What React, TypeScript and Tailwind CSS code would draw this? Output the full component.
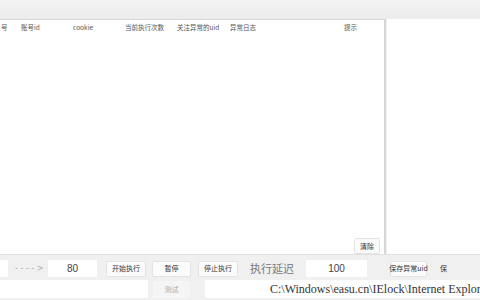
export default function App() {
  const cols = [
    { w: 'w-[20px]', t: '号' },
    { w: 'w-[52px]', t: '账号id' },
    { w: 'w-[52px]', t: 'cookie' },
    { w: 'w-[52px]', t: '当前执行次数' },
    { w: 'w-[53px]', t: '关注异常的uid' },
    { w: 'w-[114px]', t: '异常日志' },
    { w: 'flex-1', t: '提示' },
  ]

  const btn = 'h-[16px] bg-[#fbfbfb] border border-[#e3e3e3] rounded-[2px] text-[7px] text-[#333] flex items-center justify-center whitespace-nowrap'

  return (
    <div className="w-[480px] h-[300px] bg-[#f0f0f0] flex flex-col overflow-hidden" style={{ fontFamily: '"Noto Sans CJK SC", "Liberation Sans", sans-serif' }}>
      {/* top strip */}
      <div className="h-[19px] bg-gradient-to-b from-[#f3f3f3] to-[#ececec] shrink-0" />

      {/* grid area */}
      <div className="h-[235px] flex shrink-0">
        <div className="w-[386px] bg-white border-t border-r-2 border-[#d6d6d6] flex flex-col">
          <div className="flex h-[15px] items-center text-[6.5px] text-[#555]">
            {cols.map(c => (
              <div key={c.t} className={`${c.w} pl-[1px] whitespace-nowrap overflow-hidden`}>{c.t}</div>
            ))}
          </div>
          <div className="flex-1" />
          <div className="flex justify-end pr-[4px]">
            <div className={`${btn} w-[26px] h-[15px]`}>清除</div>
          </div>
        </div>
        <div className="flex-1 bg-white ml-[1px]" />
      </div>

      {/* bottom controls */}
      <div className="flex-1 border-t border-[#e0e0e0] flex flex-col pt-[5px]">
        <div className="flex items-center h-[17px]">
          <div className="w-[8px] h-[17px] bg-white" />
          <div className="ml-[7px] w-[28px] text-[8px] text-[#aaa] whitespace-nowrap" style={{ fontFamily: '"DejaVu Sans", sans-serif' }}>
            {'- - - - >'}
          </div>
          <div className="ml-[5px] w-[49px] h-[17px] bg-white text-[10px] text-[#444] flex items-center justify-center" style={{ fontFamily: '"Liberation Sans", sans-serif' }}>80</div>
          <div className={`${btn} ml-[9px] w-[40px]`}>开始执行</div>
          <div className={`${btn} ml-[6px] w-[39px]`}>暂停</div>
          <div className={`${btn} ml-[7px] w-[40px]`}>停止执行</div>
          <div className="ml-[12px] w-[56px] text-[11px] text-[#777] whitespace-nowrap">执行延迟</div>
          <div className="w-[61px] h-[17px] bg-white text-[10px] text-[#444] flex items-center justify-center" style={{ fontFamily: '"Liberation Sans", sans-serif' }}>100</div>
          <div className={`${btn} ml-[23px] w-[37px] text-[5.5px]`}>保存异常uid</div>
          <div className="ml-[13px] text-[7px] text-[#333]">保</div>
        </div>
        <div className="flex items-center h-[18px] mt-[3px]">
          <div className="w-[148px] h-[18px] bg-white" />
          <div className="ml-[5px] w-[37px] h-[17px] bg-[#f5f5f5] text-[7px] text-[#aaa] flex items-center justify-center">测试</div>
          <div className="ml-[15px] flex-1 h-[18px] bg-white text-[12px] text-[#333] whitespace-nowrap overflow-hidden pl-[65px] leading-[18px]" style={{ fontFamily: '"Liberation Serif", serif' }}>
            C:\Windows\easu.cn\IElock\Internet Explorer
          </div>
        </div>
      </div>
    </div>
  )
}
